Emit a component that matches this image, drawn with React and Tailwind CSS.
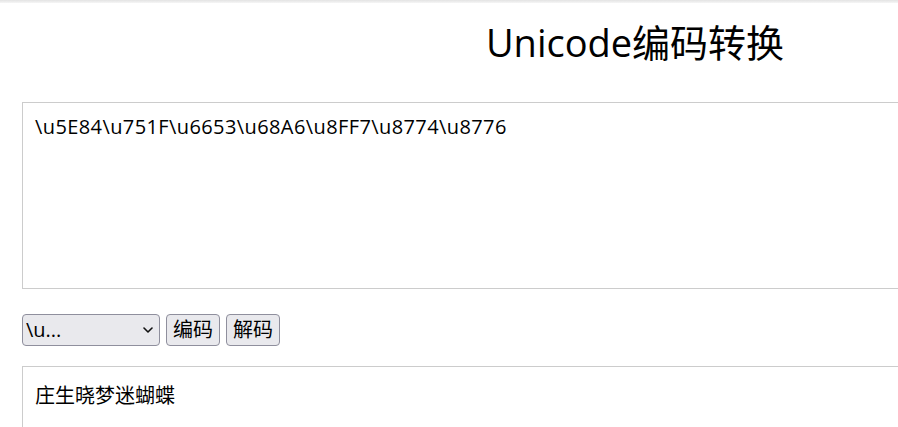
import { useState } from "react";

const FONT = { fontFamily: '"Open Sans", "Noto Sans CJK SC", sans-serif' };

const ChevronDown = () => (
  <svg width="10" height="6" viewBox="0 0 10 6" fill="none" className="pointer-events-none absolute right-[7px] top-[13px]">
    <path d="M1 1l4 4 4-4" stroke="#111" strokeWidth="1.6" strokeLinecap="round" strokeLinejoin="round" />
  </svg>
);

export default function App() {
  const [mode, setMode] = useState("u");

  return (
    <div className="w-screen h-screen overflow-hidden bg-white text-black" style={FONT}>
      <div className="h-[3px] bg-gradient-to-b from-[#e3e3e3] to-[#f6f6f6]" />
      <div className="w-[1270px]">
        <h1 className="mt-[11px] text-center text-[38px] leading-[57px] font-normal">Unicode编码转换</h1>

        <div className="mx-[22px] mt-[31px]">
          <textarea
            readOnly
            defaultValue={"\\u5E84\\u751F\\u6653\\u68A6\\u8FF7\\u8774\\u8776"}
            className="block w-full h-[187px] resize-none border border-[#cccccc] px-[12px] pt-[9px] pb-[10px] text-[20px] tracking-[0.4px] leading-[30px] outline-none"
          />

          <div className="mt-[25px] flex items-center gap-[6px]">
            <div className="relative">
              <select
                value={mode}
                onChange={(e) => setMode(e.target.value)}
                className="appearance-none w-[138px] h-[32px] rounded-[4px] border border-[#8f8f9d] bg-[#e9e9ed] pl-[3px] pr-6 text-[20px] leading-[28px] outline-none"
              >
                <option value="u">\u...</option>
                <option value="x">&amp;#x...</option>
              </select>
              <ChevronDown />
            </div>
            <button className="h-[32px] rounded-[4px] border border-[#8f8f9d] bg-[#e9e9ed] px-[6px] text-[20px] leading-[28px]">编码</button>
            <button className="h-[32px] rounded-[4px] border border-[#8f8f9d] bg-[#e9e9ed] px-[6px] text-[20px] leading-[28px]">解码</button>
          </div>

          <div className="mt-[20px] h-[120px] border border-[#cccccc] px-[12px] py-[10px] text-[20px] leading-[38px]">
            庄生晓梦迷蝴蝶
          </div>
        </div>
      </div>
    </div>
  );
}
